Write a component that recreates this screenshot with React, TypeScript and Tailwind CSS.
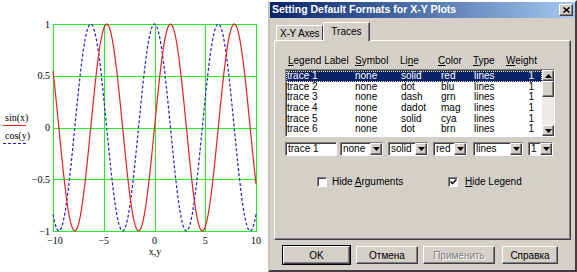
const PL = 53;
const PR = 256;
const PT = 24;
const PB = 231;

const sx = (x: number) => PL + ((x + 10) / 20) * (PR - PL);
const sy = (y: number) => PT + ((1 - y) / 2) * (PB - PT);

const curve = (f: (x: number) => number) =>
  Array.from({ length: 201 }, (_, i) => {
    const x = -10 + i * 0.1;
    return `${i ? "L" : "M"}${sx(x).toFixed(2)},${sy(f(x)).toFixed(2)}`;
  }).join(" ");

const rows = [
  ["trace 1", "none", "solid", "red", "lines", "1"],
  ["trace 2", "none", "dot", "blu", "lines", "1"],
  ["trace 3", "none", "dash", "grn", "lines", "1"],
  ["trace 4", "none", "dadot", "mag", "lines", "1"],
  ["trace 5", "none", "solid", "cya", "lines", "1"],
  ["trace 6", "none", "dot", "brn", "lines", "1"],
];

// raised 3d box like win9x buttons
const raised =
  "border border-t-white border-l-white border-r-[#404040] border-b-[#404040] shadow-[inset_-1px_-1px_0_#808080]";
const sunken =
  "border border-t-[#808080] border-l-[#808080] border-r-white border-b-white shadow-[inset_1px_1px_0_#404040]";

const Plot = () => {
  const gx = [-10, -5, 0, 5, 10];
  const gy = [1, 0.5, 0, -0.5, -1];
  return (
    <svg width="268" height="272" className="shrink-0 font-['Liberation_Serif',serif]">
      {/* grid */}
      {gx.map((x) => (
        <line key={"x" + x} x1={Math.round(sx(x)) + 0.5} x2={Math.round(sx(x)) + 0.5} y1={PT} y2={PB} stroke="#22ee22" />
      ))}
      {gy.map((y) => (
        <line key={"y" + y} y1={Math.round(sy(y)) + 0.5} y2={Math.round(sy(y)) + 0.5} x1={PL} x2={PR + 1} stroke="#22ee22" />
      ))}

      {/* curves */}
      <path d={curve(Math.cos)} fill="none" stroke="#2020d0" strokeWidth="1.2" strokeDasharray="3 2" />
      <path d={curve(Math.sin)} fill="none" stroke="#ee2020" strokeWidth="1.2" />

      {/* y ticks */}
      {gy.map((y) => (
        <text key={"ty" + y} x="50" y={sy(y)} fontSize="10" textAnchor="end" dominantBaseline="central" fill="#000">
          {y < 0 ? "\u2212" + String(-y) : String(y)}
        </text>
      ))}
      {/* x ticks */}
      {gx.map((x) => (
        <text key={"tx" + x} x={sx(x) + (x === -10 ? 2 : 0)} y="240" fontSize="10" textAnchor="middle" dominantBaseline="central" fill="#000">
          {x < 0 ? "\u2212" + String(-x) : String(x)}
        </text>
      ))}
      <text x="155" y="251" fontSize="10" textAnchor="middle" dominantBaseline="central">
        x,y
      </text>

      {/* legend */}
      <text x="5" y="117" fontSize="10" dominantBaseline="central">
        sin(x)
      </text>
      <line x1="3" x2="26" y1="125.5" y2="125.5" stroke="#ee2020" />
      <text x="5" y="135" fontSize="10" dominantBaseline="central">
        cos(y)
      </text>
      <line x1="3" x2="26" y1="143.5" y2="143.5" stroke="#2020d0" strokeDasharray="3 2" />
    </svg>
  );
};

const Arrow = ({ up }: { up?: boolean }) => (
  <svg width="7" height="4" viewBox="0 0 7 4">
    <path d={up ? "M3.5 0 L7 4 L0 4 Z" : "M0 0 L7 0 L3.5 4 Z"} fill="#000" />
  </svg>
);

const Combo = ({ text, w }: { text: string; w: string }) => (
  <div className={`flex h-[14px] items-center bg-white ${sunken} ${w}`}>
    <span className="flex-1 pl-[2px] leading-[12px]">{text}</span>
    <div className={`flex h-[12px] w-[12px] items-center justify-center bg-[#d4d0c8] ${raised}`}>
      <Arrow />
    </div>
  </div>
);

const Btn = ({ label, w, extra = "" }: { label: string; w: string; extra?: string }) => (
  <div className={`flex h-[18px] items-center justify-center bg-[#d4d0c8] ${raised} ${w} ${extra}`}>{label}</div>
);

export default function App() {
  return (
    <div className="flex h-[272px] w-[577px] overflow-hidden bg-white font-['Liberation_Sans',Arial,sans-serif] text-[10px] text-black">
      <Plot />

      {/* dialog */}
      <div className="flex h-[272px] w-[309px] flex-col border-2 border-t-white border-l-[#c8c4bc] border-r-[#404040] border-b-[#404040] bg-[#d4d0c8]">
        {/* title bar */}
        <div className="flex h-[16px] items-center justify-between bg-gradient-to-r from-[#0a246a] to-[#a6caf0] pl-[2px] pr-[2px]">
          <span className="text-[10.5px] font-bold text-white">Setting Default Formats for X-Y Plots</span>
          <div className={`flex h-[12px] w-[14px] items-center justify-center bg-[#d4d0c8] ${raised}`}>
            <svg width="7" height="6" viewBox="0 0 7 6">
              <path d="M0.5 0.5 L6.5 5.5 M6.5 0.5 L0.5 5.5" stroke="#000" strokeWidth="1.6" />
            </svg>
          </div>
        </div>

        <div className="px-[4px]">
          {/* tabs */}
          <div className="mt-[4px] flex items-end pl-[2px]">
            <div className="flex h-[15px] items-center rounded-tl-[2px] border-t border-l border-r border-t-white border-l-white border-r-[#404040] px-[3px] tracking-[-0.2px]">
              X-Y Axes
            </div>
            <div className="relative z-10 -mb-px flex h-[19px] items-center rounded-tl-[2px] border-t border-l border-r border-t-white border-l-white border-r-[#404040] bg-[#d4d0c8] px-[7px] pb-[2px] shadow-[inset_-1px_0_0_#808080]">
              Traces
            </div>
          </div>

          {/* panel */}
          <div className="h-[200px] border border-t-white border-l-white border-r-[#404040] border-b-[#404040] shadow-[inset_-1px_-1px_0_#808080]">
            {/* header */}
            <div className="flex pt-[14px] pl-[13px] leading-[11px]">
              <span className="w-[67px]">
                <u>L</u>egend Label
              </span>
              <span className="w-[45px]">
                <u>S</u>ymbol
              </span>
              <span className="w-[38px]">
                Li<u>n</u>e
              </span>
              <span className="w-[35px]">
                <u>C</u>olor
              </span>
              <span className="w-[33px]">
                <u>T</u>ype
              </span>
              <span>
                <u>W</u>eight
              </span>
            </div>

            {/* list */}
            <div className={`mt-[3px] ml-[10px] flex h-[68px] w-[270px] bg-white ${sunken}`}>
              <div className="flex flex-1 flex-col pt-[1px]">
                {rows.map((r, i) => (
                  <div
                    key={r[0]}
                    className={`grid h-[10.6px] grid-cols-[69px_46px_40px_33px_1fr_auto] items-center leading-[10px] ${
                      i === 0 ? "bg-[#0a246a] text-white outline-1 -outline-offset-1 outline-dotted outline-[#e8e0a0]" : ""
                    }`}
                  >
                    <span className="pl-[1px]">{r[0]}</span>
                    <span>{r[1]}</span>
                    <span>{r[2]}</span>
                    <span>{r[3]}</span>
                    <span>{r[4]}</span>
                    <span className="pr-[8px]">{r[5]}</span>
                  </div>
                ))}
              </div>
              {/* scrollbar */}
              <div className="flex w-[12px] flex-col bg-[#ecebe7]">
                <div className={`flex h-[11px] items-center justify-center bg-[#d4d0c8] ${raised}`}>
                  <Arrow up />
                </div>
                <div className={`h-[16px] bg-[#d4d0c8] ${raised}`} />
                <div className="flex-1" />
                <div className={`flex h-[11px] items-center justify-center bg-[#d4d0c8] ${raised}`}>
                  <Arrow />
                </div>
              </div>
            </div>

            {/* edit row */}
            <div className="mt-[5px] ml-[10px] flex items-center">
              <div className={`flex h-[14px] w-[52px] items-center bg-white pl-[2px] leading-[12px] ${sunken}`}>trace 1</div>
              <div className="ml-[3px]">
                <Combo text="none" w="w-[43px]" />
              </div>
              <div className="ml-[5px]">
                <Combo text="solid" w="w-[40px]" />
              </div>
              <div className="ml-[5px]">
                <Combo text="red" w="w-[34px]" />
              </div>
              <div className="ml-[6px]">
                <Combo text="lines" w="w-[50px]" />
              </div>
              <div className="ml-[5px]">
                <Combo text="1" w="w-[25px]" />
              </div>
            </div>

            {/* checkboxes */}
            <div className="mt-[20px] ml-[42px] flex items-center leading-[11px]">
              <div className="flex w-[131px] items-center gap-[5px]">
                <div className={`h-[10px] w-[10px] bg-white ${sunken}`} />
                <span>
                  Hide <u>A</u>rguments
                </span>
              </div>
              <div className="flex items-center gap-[7px]">
                <div className={`flex h-[10px] w-[10px] items-center justify-center bg-white ${sunken}`}>
                  <svg width="7" height="6" viewBox="0 0 7 6">
                    <path d="M0.5 2.5 L2.5 4.5 L6.5 0.5" fill="none" stroke="#000" strokeWidth="1.5" />
                  </svg>
                </div>
                <span>
                  <u>H</u>ide Legend
                </span>
              </div>
            </div>
          </div>

          {/* buttons */}
          <div className="mt-[6px] ml-[9px] flex items-center">
            <Btn label="OK" w="w-[67px]" extra="outline outline-1 outline-black" />
            <Btn label="Отмена" w="w-[62px] ml-[6px]" />
            <Btn label="Применить" w="w-[72px] ml-[5px] text-[#808080] [text-shadow:1px_1px_0_#fff]" />
            <Btn label="Справка" w="w-[56px] ml-[7px]" />
          </div>
        </div>
      </div>
    </div>
  );
}
